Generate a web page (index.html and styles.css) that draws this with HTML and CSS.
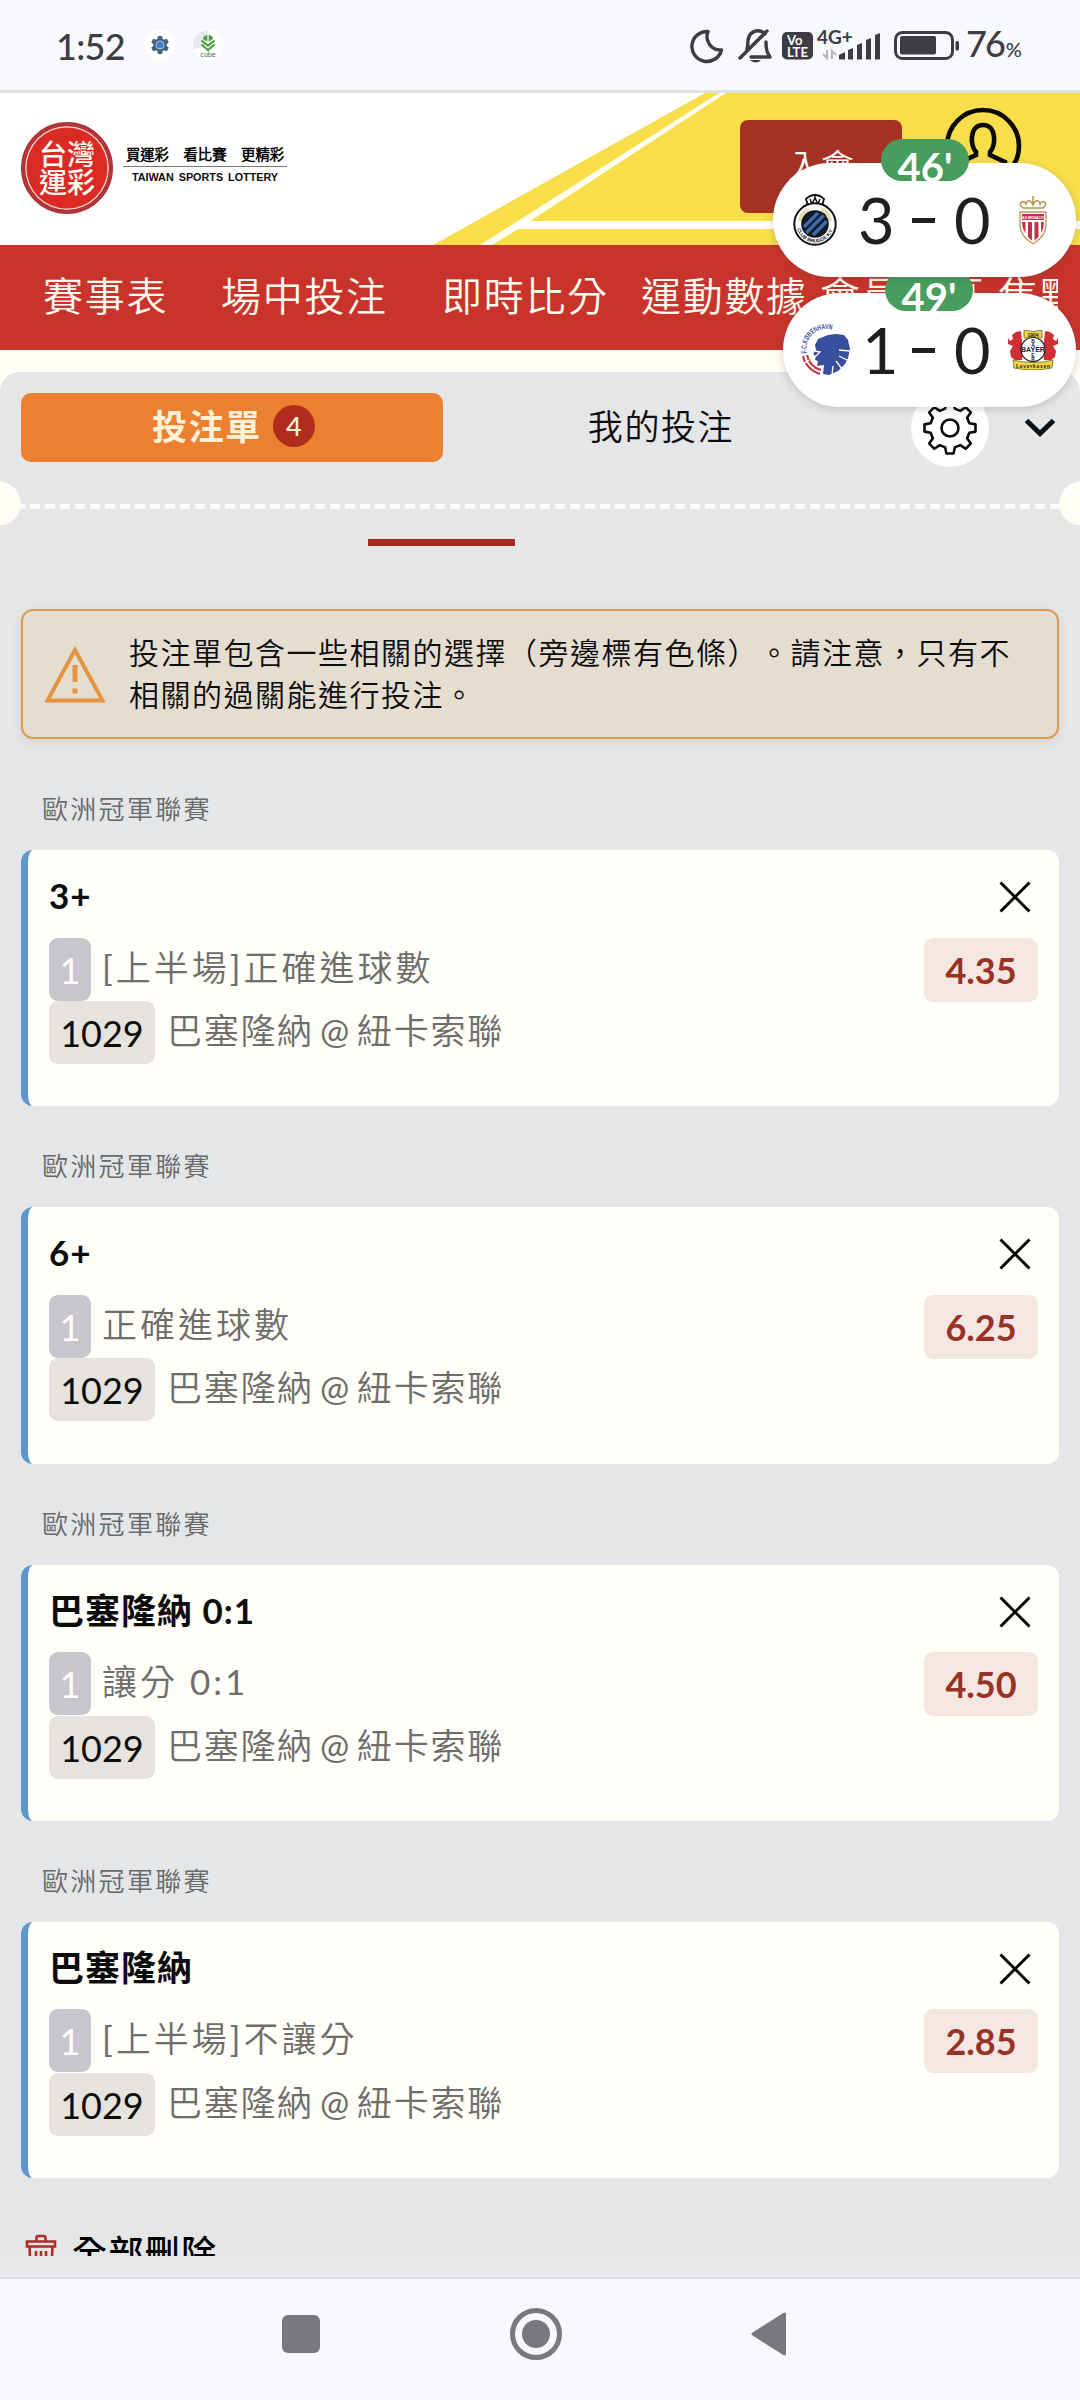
FILE: index.html
```html
<!DOCTYPE html>
<html lang="zh-Hant">
<head>
	<meta charset="UTF-8">
	<title>台灣運彩</title>
	<link rel="stylesheet" href="styles.css">
</head>
<body>
	<!-- 狀態列 -->
	<div class="status">
		<span class="time">1:52</span>
		<svg class="app_icon" width="32" height="32" viewBox="-16 -16 32 32">
			<circle r="15.5" fill="#fff"/>
			<g fill="#48617d">
				<circle r="6.5"/>
				<path d="M-2-9h4l1 4h-6zM-2 9h4l1-4h-6z"/>
				<path d="M-2-9h4l1 4h-6zM-2 9h4l1-4h-6z" transform="rotate(60)"/>
				<path d="M-2-9h4l1 4h-6zM-2 9h4l1-4h-6z" transform="rotate(120)"/>
			</g>
			<circle r="4" fill="#3f7fd0" stroke="#a9c6ea" stroke-width="1"/>
		</svg>
		<svg class="app_icon" width="32" height="32" viewBox="-16 -16 32 32">
			<circle r="15.5" fill="#fff"/>
			<path d="M-15-3A15.500 15.500 0 0 1 0-15L-3 2-15 4z" fill="#e7e9ec"/>
			<path d="M-5-6a5 4 0 0 1 4.400-4v6.500zM5-6a5 4 0 0 0-4.400-4v6.500z" fill="#4aa33f"/>
			<path d="M-6.500-4.500L0 .5l6.500-5M-6.500-.5L0 5l6.500-5.500" fill="none" stroke="#4aa33f" stroke-width="2.200"/>
			<text y="12" class="cube" text-anchor="middle">cube</text>
		</svg>
		<svg class="sys" width="270" height="40" viewBox="690 26 270 40">
			<g fill="none" stroke="#3d3c43" stroke-width="3.400" stroke-linejoin="round" stroke-linecap="round">
				<path d="M708 31.500A15 15 0 1 0 721.500 50A13.500 13.500 0 0 1 708 31.500z"/>
				<path d="M740 58L767 31M747 49c1-3 1-7 1-9 2-11 13-11 17-6M766 42c0 8 1 10 4 15h-19"/>
			</g>
			<path d="M750 60h11q-5 5-11 0z" fill="#3d3c43"/>
			<rect x="782" y="32" width="31" height="27.500" rx="5" fill="#3d3c43"/>
			<text x="787" y="45" class="volte">Vo</text>
			<text x="787" y="57" class="volte">LTE</text>
			<text x="817" y="44" class="net">4G+</text>
			<path d="M827 50v8l-4-4M832 59v-8l4 4" fill="none" stroke="#b5b5bb" stroke-width="2"/>
			<path d="M839 55l6-3v7.500h-6zM848 50l5-2v11.500h-5zM857 45l5-2v16.500h-5zM866 40l5-2v21.500h-5zM875 35l5-2v26.500h-5z" fill="#3d3c43"/>
			<rect x="895.500" y="32.500" width="57" height="26" rx="7" fill="none" stroke="#3d3c43" stroke-width="3"/>
			<rect x="900" y="36" width="36" height="18.500" rx="2" fill="#3d3c43"/>
			<rect x="955.500" y="41" width="3.500" height="9.500" rx="1.500" fill="#3d3c43"/>
		</svg>
		<span class="power">76<small>%</small></span>
	</div>

	<!-- 頁首 -->
	<div class="header">
		<svg class="court" width="647" height="152" viewBox="433 93 647 152">
			<path d="M433 245L705 93H1080V245z" fill="#f8de4a"/>
			<path d="M480 245L719 93H726L518 229 492 245z" fill="#fffef0"/>
			<path d="M505 229L520 221H1080V229z" fill="#fff"/>
		</svg>
		<div class="logo">
			<div class="seal"><span>台灣</span><span>運彩</span></div>
			<div class="slogan">
				<p class="zh"><span>買運彩</span><span>看比賽</span><span>更精彩</span></p>
				<p class="en">TAIWAN SPORTS LOTTERY</p>
			</div>
		</div>
		<a class="join">入會</a>
		<svg class="user" width="78" height="78" viewBox="-39 -39 78 78" fill="none" stroke="#0b0905" stroke-width="4.600">
			<circle r="36"/>
			<path d="M-22 22v-6l15-7v-3c-6-6-7-27 7-27s13 21 7 27v3l15 7v6"/>
		</svg>
	</div>

	<div class="nav">
		<a class="n1">賽事表</a>
		<a class="n2">場中投注</a>
		<a class="n3">即時比分</a>
		<a class="n4">運動數據</a>
		<a class="n5">會員專區</a>
		<a class="n6">焦點</a>
	</div>

	<!-- 投注單 -->
	<div class="slip">
		<div class="tabs">
			<a class="tab active">投注單<i>4</i></a>
			<a class="tab">我的投注</a>
			<span class="setting">
				<svg width="56" height="56" viewBox="-28 -28 56 56" fill="none" stroke="#0c0c0c" stroke-width="2.600" stroke-linejoin="round">
					<path d="M19.400-4.800L25.500-3.600V3.600L19.400 4.800 17.100 10.300 20.800 15.600 15.600 20.800 10.300 17.100 4.800 19.400 3.600 25.500H-3.600L-4.800 19.400-10.300 17.100-15.600 20.800-20.800 15.600-17.100 10.300-19.400 4.800-25.500 3.600V-3.600L-19.400-4.800-17.100-10.300-20.800-15.600-15.600-20.800-10.300-17.100-4.800-19.400-3.600-25.500H3.600L4.800-19.400 10.300-17.100 15.600-20.800 20.800-15.600 17.100-10.300z"/>
					<circle r="8.500"/>
				</svg>
			</span>
			<svg class="arrow" width="32" height="20" viewBox="0 0 32 20"><path d="M2.500 2.500L16 15.500 29.500 2.500" fill="none" stroke="#0e1114" stroke-width="5"/></svg>
		</div>
		<div class="tear"></div>
		<div class="mark"></div>

		<div class="alert">
			<svg width="64" height="58" viewBox="0 0 64 58">
				<path d="M32 5L4.500 55.500H59.500z" fill="none" stroke="#e2943f" stroke-width="4"/>
				<path d="M29.500 20h5v17h-5zM29.500 43.500h5v5h-5z" fill="#e2943f"/>
			</svg>
			<p>投注單包含一些相關的選擇（旁邊標有色條）。請注意，只有不<br>相關的過關能進行投注。</p>
		</div>

		<div class="list">
			<h3>歐洲冠軍聯賽</h3>
			<div class="bet">
				<div class="title">3+<svg class="close" width="32" height="32" viewBox="0 0 32 32"><path d="M1.500 1.500l29 29M30.500 1.500l-29 29"/></svg></div>
				<div class="row"><b class="tag">1</b><span class="market">[上半場]正確進球數</span><strong class="odds">4.35</strong></div>
				<div class="row"><b class="tag code">1029</b><span class="match">巴塞隆納 @ 紐卡索聯</span></div>
			</div>
			<h3>歐洲冠軍聯賽</h3>
			<div class="bet">
				<div class="title">6+<svg class="close" width="32" height="32" viewBox="0 0 32 32"><path d="M1.500 1.500l29 29M30.500 1.500l-29 29"/></svg></div>
				<div class="row"><b class="tag">1</b><span class="market">正確進球數</span><strong class="odds">6.25</strong></div>
				<div class="row"><b class="tag code">1029</b><span class="match">巴塞隆納 @ 紐卡索聯</span></div>
			</div>
			<h3>歐洲冠軍聯賽</h3>
			<div class="bet">
				<div class="title">巴塞隆納 0:1<svg class="close" width="32" height="32" viewBox="0 0 32 32"><path d="M1.500 1.500l29 29M30.500 1.500l-29 29"/></svg></div>
				<div class="row"><b class="tag">1</b><span class="market">讓分 0:1</span><strong class="odds">4.50</strong></div>
				<div class="row"><b class="tag code">1029</b><span class="match">巴塞隆納 @ 紐卡索聯</span></div>
			</div>
			<h3>歐洲冠軍聯賽</h3>
			<div class="bet">
				<div class="title">巴塞隆納<svg class="close" width="32" height="32" viewBox="0 0 32 32"><path d="M1.500 1.500l29 29M30.500 1.500l-29 29"/></svg></div>
				<div class="row"><b class="tag">1</b><span class="market">[上半場]不讓分</span><strong class="odds">2.85</strong></div>
				<div class="row"><b class="tag code">1029</b><span class="match">巴塞隆納 @ 紐卡索聯</span></div>
			</div>
		</div>

		<div class="clear">
			<svg width="32" height="34" viewBox="0 0 32 34" fill="none" stroke="#ad2d25" stroke-width="2.600">
				<path d="M2 7.500h28v5H2zM11.500 7V4q0-2 2-2h5q2 0 2 2v3M4.500 13l1 19h21l1-19M11 17v10M16 17v10M21 17v10"/>
			</svg>
			<span>全部刪除</span>
		</div>
	</div>

	<!-- 系統導覽列 -->
	<div class="sysbar">
		<svg width="506" height="54" viewBox="281 2307 506 54" fill="#79787e">
			<rect x="282" y="2315" width="38" height="38" rx="6"/>
			<circle cx="536" cy="2334" r="23.500" fill="none" stroke="#79787e" stroke-width="5"/>
			<circle cx="536" cy="2334" r="14"/>
			<path d="M753 2334L784.500 2314V2354z" stroke="#79787e" stroke-width="3" stroke-linejoin="round"/>
		</svg>
	</div>

	<!-- 懸浮比分 -->
	<div class="score s2">
		<span class="min">49'</span>
		<svg class="crest" width="52" height="52" viewBox="0 0 52 52">
			<defs><path id="arc_k" d="M6 29A19.500 19.500 0 0 1 38 10"/></defs>
			<text class="k_name"><textPath href="#arc_k" textLength="41" lengthAdjust="spacingAndGlyphs">F.C.KØBENHAVN</textPath></text>
			<path d="M14 21l3-6 10-4 8-1 8 1 4 5 2 9-2 9-3 6-7 7-9 4-6-1 1-9-7 1 1-5-3-1 1-4-3-2 3-4z" fill="#384f9f"/>
			<path d="M49 27l-11-1M48 37l-10-5M41 45l-6-8M31 51l1-9M14 27l5 1-4 4" stroke="#fff" stroke-width="1.300" fill="none"/>
			<path d="M2 32A24 24 0 0 0 19 50M6 31A20 20 0 0 0 20 46" fill="none" stroke="#c23a3c" stroke-width="2.200"/>
			<path d="M1 41l7-5" stroke="#fff" stroke-width="1.500"/>
		</svg>
		<span class="num a">1</span><span class="dash"></span><span class="num b">0</span>
		<svg class="crest" width="52" height="40" viewBox="0 0 52 40">
			<path d="M14 1l-5 1-4 3 1 4-3 2-2-3v6l5 2-3 5 1 6 4 3h7l1-7z" fill="#cf2e35"/>
			<path d="M38 1l5 1 4 3-1 4 3 2 2-3v6l-5 2 3 5-1 6-4 3h-7l-1-7z" fill="#cf2e35"/>
			<path d="M17 0q9 3 18 0v8H17zM6 30q20 5 40 0l-1 8q-19 4-38 0z" fill="#f0d43c" stroke="#4a3c10" stroke-width=".6"/>
			<circle cx="26" cy="19.500" r="12" fill="#fff" stroke="#222" stroke-width="1.200"/>
			<text x="26" y="6.500" class="b_txt" text-anchor="middle">1904</text>
			<text x="26" y="22" class="b_name" text-anchor="middle">BAYER</text>
			<g class="b_txt" text-anchor="middle"><text x="26" y="12.500">B</text><text x="26" y="17">A</text><text x="26" y="26.500">E</text><text x="26" y="31">R</text></g>
			<text x="26" y="37.500" class="b_txt" text-anchor="middle" textLength="34">Leverkusen</text>
		</svg>
	</div>
	<div class="score s1">
		<span class="min">46'</span>
		<svg class="crest" width="44" height="52" viewBox="0 0 44 52">
			<path d="M15 12l-2-7q4-4 9-4t9 4l-2 7z" fill="#fff" stroke="#111" stroke-width="1.800"/>
			<path d="M17 5l2 5 3-6 3 6 2-5M22 0v4" fill="none" stroke="#111" stroke-width="1.500"/>
			<circle cx="22" cy="30" r="20.700" fill="#fff" stroke="#0d1016" stroke-width="2"/>
			<path d="M6.500 27A16 16 0 0 1 16 15.500M28 15.500A16 16 0 0 1 37.500 27" fill="none" stroke="#e3dcae" stroke-width="4"/>
			<circle cx="22" cy="30" r="13" fill="#101a2b"/>
			<path d="M11 33L25 19M13 39L32 20M20 41L34 27" stroke="#3d6ba8" stroke-width="3.600"/>
			<circle cx="22" cy="30" r="13" fill="none" stroke="#0d1016" stroke-width="1.500"/>
			<defs><path id="arc_c" d="M3.500 30A18.500 18.500 0 0 0 40.500 30"/></defs>
			<text class="c_name"><textPath href="#arc_c" startOffset="5" textLength="47">CLUB BRUGGE K.V</textPath></text>
		</svg>
		<span class="num a">3</span><span class="dash"></span><span class="num b">0</span>
		<svg class="crest" width="30" height="50" viewBox="0 0 30 50">
			<path d="M5 13q-5-4-1-6 3-1 4 2 1-4 4-3 2 1 3 4 1-3 3-4 3-1 4 3 1-3 4-2 4 2-1 6zM15 1v9" fill="none" stroke="#b9924d" stroke-width="1.500"/>
			<path d="M2 17h26v13q0 11-13 19Q2 41 2 30z" fill="#fff" stroke="#c49860" stroke-width="1.400"/>
			<path d="M4 19h22v6H4zM4 27h3.500v11Q4 33 4 27zM10 27h4v18.500l-4-3.500zM16.500 27h4v15l-4 3.500zM23 27h3q0 6-3 11z" fill="#c5304b"/>
			<text x="15" y="24" class="m_name" text-anchor="middle">AS MONACO</text>
		</svg>
	</div>
</body>
</html>
```
FILE: styles.css
```css
/* 標籤樣式初始化 */
body{margin:0;padding:0;background:#fffdf6;color:#0c0c0c;font-family:Lato,"Noto Sans CJK TC DemiLight","Noto Sans CJK TC",sans-serif;}
p,h3{margin:0;padding:0;font-weight:normal;}
i,b{font-style:normal;font-weight:normal;}
svg{display:block;flex:none;}

body{
	position: relative;
	display: flex;
	flex-direction: column;
	width: 1080px;
	height: 2400px;
	overflow: hidden;
}

/* 狀態列 */
.status{
	display: flex;
	align-items: center;
	box-sizing: border-box;
	height: 93px;
	flex: none;
	padding-left: 56px;
	border-bottom: 3px #dee1df solid;
	background: #f8f9fd;
	color: #3d3c43;
}

.status .time{
	width: 88px;
	padding-top: 2px;
	font: 500 36px/42px Lato, sans-serif;
	letter-spacing: -.7px;
}

.status .app_icon{
	margin-right: 16px;
}

.status .cube{
	font: 7px Lato, sans-serif;
	fill: #3d6b50;
}

.status .sys{
	margin: 2px 0 0 450px;
}

.status .volte{
	font: bold 13px Lato, sans-serif;
	fill: #fff;
}

.status .net{
	font: bold 19px Lato, sans-serif;
	fill: #3d3c43;
}

.status .power{
	margin-left: 6px;
	padding-top: 2px;
	font: 500 36px/42px Lato, sans-serif;
	letter-spacing: -2px;
}

.status .power small{
	margin-left: 2px;
	font-size: 20px;
}

/* 頁首 */
.header{
	position: relative;
	display: flex;
	flex: none;
	height: 152px;
	background: #fff;
}

.header .court{
	position: absolute;
	right: 0;
	top: 0;
}

.header .logo{
	display: flex;
	position: relative;
	width: 719px;
	padding: 29px 0 0 21px;
}

.header .seal{
	display: flex;
	flex-direction: column;
	justify-content: center;
	align-items: center;
	box-sizing: border-box;
	width: 92px;
	height: 92px;
	padding-bottom: 2px;
	border: 4px #b03438 solid;
	border-radius: 50%;
	box-shadow: inset 0 0 0 1.5px #f6d3cc;
	background: #d92b24;
	color: #fffdf6;
	font-family: "Noto Sans CJK TC", sans-serif;
	font-size: 28px;
	font-weight: 500;
	line-height: 28px;
}

.header .slogan{
	width: 164px;
	height: 42px;
	margin: 23px 0 0 10px;
}

.header .zh{
	display: flex;
	justify-content: space-between;
	height: 21px;
	padding: 0 3px;
	border-bottom: 1px #777 solid;
	color: #000;
	font-size: 14.3px;
	font-weight: bold;
	line-height: 19px;
}

.header .en{
	font: bold 10.8px/21px "Liberation Sans", Arial, sans-serif;
	text-align: center;
	word-spacing: 2px;
	white-space: nowrap;
}

.header .join{
	position: relative;
	width: 162px;
	height: 93px;
	margin-top: 27px;
	border-radius: 8px;
	background: #a63223;
	color: #fff;
	font-size: 33px;
	line-height: 90px;
	text-align: center;
}

.header .user{
	position: relative;
	margin: 14px 0 0 42px;
}

/* 主選單 */
.nav{
	display: flex;
	flex: none;
	height: 105px;
	padding: 0 20px 0 43px;
	background: #c8342b;
	color: #fffaf0;
	font-size: 40px;
	line-height: 103px;
	letter-spacing: 1.7px;
	white-space: nowrap;
	overflow: hidden;
}

.nav .n1{width:178px;}
.nav .n2{width:221px;}
.nav .n3{width:199px;}
.nav .n4{width:179px;}
.nav .n5{width:178px;}
.nav .n6{width:60px;overflow:hidden;}

/* 投注單 */
.slip{
	flex: none;
	height: 1885px;
	margin-top: 22px;
	border-radius: 20px 20px 0 0;
	background: #e4e6e8;
	overflow: hidden;
	box-shadow: 0 20px 0 #e6e8ea;
}

.tabs{
	display: flex;
	align-items: center;
	height: 69px;
	padding: 21px 21px 0;
}

.tabs .tab{
	display: flex;
	justify-content: center;
	align-items: center;
	width: 436px;
	height: 69px;
	font-size: 35px;
	letter-spacing: 1.6px;
	line-height: 66px;
	padding-bottom: 3px;
	box-sizing: border-box;
}

.tabs .active{
	width: 422px;
	padding: 0 0 3px 3px;
	border-radius: 10px;
	background: #ed7f31;
	color: #fff1d6;
	font-family: Lato, "Noto Sans CJK TC", sans-serif;
	font-weight: bold;
}

.tabs .active i{
	width: 42px;
	height: 42px;
	margin-left: 11px;
	border-radius: 50%;
	background: #b02d1e;
	font-size: 27px;
	font-weight: 500;
	letter-spacing: 0;
	line-height: 41px;
	text-align: center;
}

.tabs .setting{
	display: flex;
	justify-content: center;
	align-items: center;
	width: 78px;
	height: 78px;
	margin-left: 32px;
	border-radius: 50%;
	background: #fffffd;
}

.tabs .arrow{
	margin-left: 35px;
}

.tear{
	height: 43px;
	margin-top: 20px;
	background:
		radial-gradient(circle at -1px 50%, #fffdf6 21.5px, transparent 22px),
		radial-gradient(circle at 1081px 50%, #fffdf6 21.5px, transparent 22px),
		repeating-linear-gradient(90deg, #fbfbfa 0 10px, transparent 10px 15px) 0 22px / 100% 5px no-repeat;
}

.mark{
	width: 147px;
	height: 7px;
	margin: 14px 0 0 368px;
	background: #a52a24;
}

.alert{
	display: flex;
	align-items: center;
	box-sizing: border-box;
	height: 130px;
	margin: 63px 21px 0;
	padding-left: 20px;
	border: 2px #de9a56 solid;
	border-radius: 12px;
	background: #e6ddd1;
	box-shadow: 0 3px 10px rgba(150,150,130,.25);
	font-size: 30px;
	letter-spacing: 1.5px;
	line-height: 42px;
	white-space: nowrap;
	text-spacing-trim: space-all;
}

.alert p{
	margin: -2px 0 0 22px;
}

.list h3{
	height: 101px;
	padding-left: 42px;
	color: #68696b;
	font-size: 26px;
	letter-spacing: 2.3px;
	line-height: 121px;
}

.list h3:first-child{
	height: 111px;
	line-height: 141px;
}

.bet{
	box-sizing: border-box;
	height: 256.3px;
	margin: 0 21px;
	padding: 14px 21px 0 21px;
	border-left: 7px #5b97cc solid;
	border-radius: 12px;
	background: #fffef8;
}

.bet .title{
	display: flex;
	justify-content: space-between;
	align-items: center;
	height: 66px;
	padding-right: 7px;
	margin-bottom: 7.5px;
	font-family: Lato, "Noto Sans CJK TC", sans-serif;
	font-size: 35px;
	font-weight: bold;
	letter-spacing: 1px;
	line-height: 62px;
	align-items: flex-start;
}

.bet .close{
	margin-top: 17px;
	fill: none;
	stroke: #000;
	stroke-width: 3;
}

.bet .row{
	display: flex;
	height: 63.500px;
	color: #6e6d69;
	font-size: 35px;
	line-height: 58px;
}

.bet .tag{
	width: 42px;
	height: 63px;
	border-radius: 9px;
	background: #c7c6cc;
	color: #fff;
	font-size: 36px;
	line-height: 64px;
	text-align: center;
}

.bet .code{
	width: 106px;
	background: #e6e3df;
	color: #0c0c0c;
}

.bet .market{
	margin-left: 11px;
	letter-spacing: 3px;
}

.bet .match{
	margin-left: 12px;
	letter-spacing: 1.7px;
	word-spacing: -4.5px;
}

.bet .odds{
	width: 114px;
	height: 64px;
	margin-left: auto;
	border-radius: 9px;
	background: #f4e6e0;
	color: #983227;
	font-size: 36px;
	font-weight: bold;
	line-height: 64px;
	text-align: center;
}

/* 捲動區底部只露出上半部 */
.clear{
	display: flex;
	height: 22px;
	margin: 56px 0 0 25px;
	color: #000;
	font-family: Lato, "Noto Sans CJK TC", sans-serif;
	font-size: 35px;
	font-weight: 500;
	letter-spacing: 1.4px;
	line-height: 36px;
	overflow: hidden;
}

.clear span{
	margin: 0 0 0 15px;
}

/* 系統導覽列 */
.sysbar{
	position: relative;
	flex: 1;
	padding: 28px 0 0 281px;
	margin-top: 20px;
	border-top: 2px #dddfe4 solid;
	background: #f8f9fe;
}

/* 懸浮比分 */
.score{
	position: absolute;
	display: flex;
	align-items: center;
	height: 114px;
	border-radius: 57px;
	background: #fff;
	box-shadow: 0 2px 8px rgba(60,60,60,.22);
}

.score.s1{
	left: 773px;
	top: 163px;
	width: 283px;
	padding-left: 20px;
}

.score.s2{
	left: 783px;
	top: 293px;
	width: 275px;
	padding-left: 18px;
}

.score .min{
	position: absolute;
	left: 108px;
	top: -24px;
	width: 88px;
	height: 42px;
	border-radius: 21px;
	background: #479d5d;
	color: #fff;
	font-size: 40px;
	font-weight: bold;
	line-height: 57px;
	text-align: center;
	overflow: hidden;
}

.score.s2 .min{
	left: 102px;
}

.score .num{
	width: 36px;
	color: #1f1f1f;
	font-size: 63px;
	line-height: 62px;
	text-align: center;
}

.score .a{margin-left:21px;}
.s2 .a{margin-left:9px;}

.score .dash{
	width: 23px;
	height: 5px;
	margin: 0 19px 0 18px;
	background: #1f1f1f;
}

.s2 .dash{margin-left:14px;}
.score .b + .crest{margin-left:28px;}
.s2 .b + .crest{margin-left:17px;}

.k_name{font:bold 7.5px "Liberation Sans",sans-serif;fill:#384f9f;}
.b_name{font:bold 7px "Liberation Sans",sans-serif;fill:#222;}
.b_txt{font:bold 5px "Liberation Sans",sans-serif;fill:#222;}
.c_name{font:bold 5px "Liberation Sans",sans-serif;fill:#111;}
.m_name{font:bold 3.5px "Liberation Sans",sans-serif;fill:#fff;}
```
